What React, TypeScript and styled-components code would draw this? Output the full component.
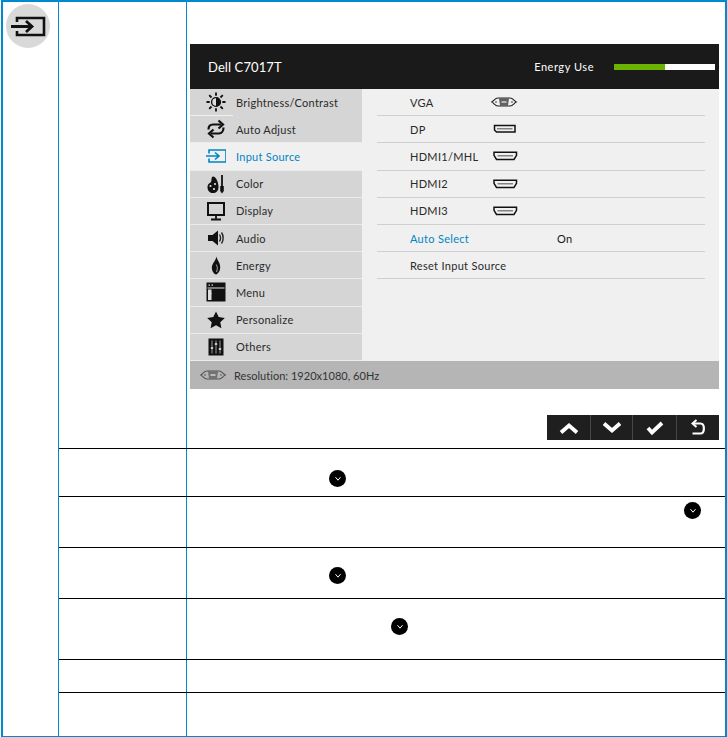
import React from "react";
import styled, { createGlobalStyle } from "styled-components";

const Global = createGlobalStyle`
  html, body { margin: 0; padding: 0; background: #fff; }
  body { font-family: "Lato", "Liberation Sans", sans-serif; }
`;

const Page = styled.div`
  padding-left: 1px;
  width: 726px;
  height: 737px;
`;
const Frame = styled.div`
  box-sizing: border-box;
  width: 726px;
  height: 737px;
  border: 2px solid #0089cf;
  border-bottom-width: 1px;
  display: grid;
  grid-template-columns: 56px 1fr;
`;
const IconColumn = styled.div`
  border-right: 1px solid #0089cf;
  padding: 2px 0 0 3px;
`;
const IconDisc = styled.div`
  width: 44px;
  height: 44px;
  border-radius: 50%;
  background: #d9d9d9;
`;
const Rows = styled.div`
  display: flex;
  flex-direction: column;
`;
const Row = styled.div<{ $h: number; $first?: boolean }>`
  box-sizing: border-box;
  height: ${(p) => p.$h}px;
  display: grid;
  grid-template-columns: 128px 1fr;
  border-top: ${(p) => (p.$first ? "none" : "1px solid #000")};
`;
const LabelCell = styled.div`
  border-right: 1px solid #0089cf;
`;
const BodyCell = styled.div`
  min-width: 0;
`;
const MainCell = styled.div`
  padding: 42px 0 0 3px;
`;
const Menu = styled.div`
  width: 529px;
  height: 345px;
  display: grid;
  grid-template-rows: 45px 272px 28px;
`;
const MenuHeader = styled.div`
  background: #1a1a1a;
  color: #fff;
  display: flex;
  align-items: center;
  justify-content: space-between;
  padding: 0 4px 0 18px;
`;
const Title = styled.span`
  font-size: 13px;
  letter-spacing: 0.1px;
`;
const EnergyGroup = styled.div`
  display: flex;
  align-items: center;
  gap: 20px;
`;
const EnergyLabel = styled.span`
  font-size: 11px;
  letter-spacing: 0.55px;
`;
const EnergyBar = styled.div`
  width: 101px;
  height: 6px;
  background: #fff;
`;
const EnergyFill = styled.div`
  height: 100%;
  width: 51px;
  background: #6cb200;
`;
const MenuBody = styled.div`
  display: grid;
  grid-template-columns: 172px 1fr;
  background: #f0f0f0;
`;
const Sidebar = styled.div`
  display: grid;
  grid-template-rows: repeat(10, 1fr);
`;
const SideItem = styled.div<{ $active?: boolean; $partial?: boolean }>`
  box-sizing: border-box;
  position: relative;
  display: flex;
  align-items: center;
  gap: 10px;
  padding-left: 16px;
  background: ${(p) => (p.$active ? "#f0f0f0" : "#d5d5d5")};
  color: ${(p) => (p.$active ? "#0085c3" : "#2a2a2a")};
  border-bottom: 1px solid ${(p) => (p.$partial ? "#d5d5d5" : "#ececec")};
  font-size: 11px;
  letter-spacing: 0.26px;
  ${(p) =>
    p.$partial &&
    `&::after {
      content: "";
      position: absolute;
      left: 0;
      bottom: -1px;
      width: 43px;
      height: 1px;
      background: #f0f0f0;
    }`}
`;
const Options = styled.div`
  display: grid;
  grid-template-rows: repeat(10, 1fr);
  padding: 0 14px 0 15px;
`;
const Option = styled.div<{ $active?: boolean }>`
  box-sizing: border-box;
  display: grid;
  grid-template-columns: 115px 66px 1fr;
  align-items: center;
  padding-left: 33px;
  border-bottom: 1px solid #cfcfcf;
  color: ${(p) => (p.$active ? "#0085c3" : "#2a2a2a")};
  font-size: 11px;
  letter-spacing: 0.3px;
`;
const OptionIcon = styled.span`
  display: flex;
  align-items: center;
  grid-column: 2;
  margin-left: -34px;
`;
const OptionValue = styled.span`
  grid-column: 2;
  margin-left: 32px;
  color: #1a1a1a;
`;
const MenuFooter = styled.div`
  background: #b5b5b5;
  color: #333;
  display: flex;
  align-items: center;
  gap: 6px;
  padding-left: 10px;
  font-size: 11px;
  letter-spacing: 0.03px;
`;
const Controls = styled.div`
  margin: 26px 0 0 357px;
  width: 172px;
  height: 25px;
  display: grid;
  grid-template-columns: 43px 42px 44px 43px;
  background: #1f1f1f;
`;
const ControlButton = styled.div`
  display: flex;
  align-items: center;
  justify-content: center;
  & + & {
    border-left: 1px solid #484848;
  }
`;
const Badge = styled.div<{ $x: number; $y: number }>`
  width: 17px;
  height: 17px;
  margin: ${(p) => `${p.$y}px 0 0 ${p.$x}px`};
  border-radius: 50%;
  background: #000;
  display: flex;
  align-items: center;
  justify-content: center;
`;

const Svg = ({ w = 20, h = 20, children }: { w?: number; h?: number; children: React.ReactNode }) => (
  <svg width={w} height={h} viewBox={`0 0 ${w} ${h}`} style={{ flex: "none", display: "block" }}>
    {children}
  </svg>
);

const Sun = () => (
  <Svg>
    <circle cx="10" cy="10" r="4.4" fill="#ddd" stroke="#111" strokeWidth="1.4" />
    <path d="M10 5.600a4.400 4.400 0 0 1 0 8.800z" fill="#111" />
    <path d="M10 .5v3.200M10 16.300v3.200M.5 10h3.200M16.300 10h3.200M3.200 3.200l2.300 2.300M14.500 14.500l2.300 2.300M3.200 16.800l2.300-2.300M14.500 5.500l2.300-2.300" stroke="#111" strokeWidth="1.800" />
  </Svg>
);
const Cycle = () => (
  <Svg>
    <path d="M2.500 10.500C2.500 7 4.500 5.500 7 5.500h8" fill="none" stroke="#111" strokeWidth="2.200" />
    <path d="M12.500 1.500l4.500 4-4.500 4" fill="none" stroke="#111" strokeWidth="2.200" />
    <path d="M17.500 8.500c0 3.500-2 6-4.500 6H5" fill="none" stroke="#111" strokeWidth="2.200" />
    <path d="M7.500 10.500l-4.500 4 4.500 4" fill="none" stroke="#111" strokeWidth="2.200" />
  </Svg>
);
const InputIcon = ({ color, large }: { color: string; large?: boolean }) =>
  large ? (
    <Svg w={44} h={44}>
      <path d="M11 18v-4h27v17H11v-4" fill="none" stroke={color} strokeWidth="2.600" />
      <path d="M5 22.500h21M20 17l6 5.500-6 5.500" fill="none" stroke={color} strokeWidth="2.800" />
    </Svg>
  ) : (
    <Svg w={20} h={20}>
      <path d="M3 7.500V4h17V16H3v-3.500" fill="none" stroke={color} strokeWidth="1.600" />
      <path d="M-4 10h17M9 6.500l4 3.500-4 3.500" fill="none" stroke={color} strokeWidth="1.600" />
    </Svg>
  );
const Palette = () => (
  <Svg>
    <path d="M7 2.500c3 0 5.500 5.500 5.500 10.500 0 4-2.500 6-5.500 6s-5.500-2-5.500-6c0-3 2.500-4 3.500-5 .8-1 0-5.500 2-5.500z" fill="#111" />
    <circle cx="4.500" cy="12" r="1.100" fill="#ddd" />
    <circle cx="9" cy="10" r="1.100" fill="#ddd" />
    <circle cx="8" cy="15" r="1.100" fill="#ddd" />
    <path d="M16 1v12" stroke="#111" strokeWidth="1.800" />
    <path d="M14.200 12h3.600v5l-1.800 2.500-1.800-2.500z" fill="#111" />
  </Svg>
);
const Monitor = () => (
  <Svg>
    <rect x="2" y="2" width="16" height="12" fill="none" stroke="#111" strokeWidth="2" />
    <path d="M10 14v4M5 18.500h10" stroke="#111" strokeWidth="1.800" />
  </Svg>
);
const Speaker = () => (
  <Svg>
    <path d="M2 7h4.500L12 2.500v15L6.500 13H2z" fill="#111" />
    <path d="M13.500 6.500c1.200 2 1.200 5 0 7M15.500 4.500c2.200 3 2.200 8 0 11" fill="none" stroke="#222" strokeWidth="1.400" />
  </Svg>
);
const Flame = () => (
  <Svg>
    <path d="M10.500 1.500c.5 3.500 3.700 6 3.700 10.500 0 4-2 6.800-4.200 7.500-2.400-.7-4.200-3.500-4.200-6.800 0-4 3.900-6.700 4.700-11.200z" fill="#111" />
    <path d="M10.300 9.500c1.200 2.500 1.500 4.500.2 7.500" fill="none" stroke="#aaa" strokeWidth="1" />
  </Svg>
);
const WindowIcon = () => (
  <Svg>
    <rect x=".5" y=".5" width="19" height="19" fill="#111" />
    <rect x="1.500" y="5.500" width="17" height="1" fill="#ddd" />
    <rect x="2.500" y="2.500" width="1.500" height="1.200" fill="#ddd" />
    <rect x="5.500" y="2.500" width="1.500" height="1.200" fill="#ddd" />
    <rect x="2" y="7.500" width="3.500" height="10.500" fill="#ddd" />
    <rect x="5.500" y="11" width="0.500" height="1" fill="#ddd" />
  </Svg>
);
const Star = () => (
  <Svg>
    <path d="M10 1.500l2.700 5.600 6.100.8-4.500 4.300 1.100 6.100L10 15.300l-5.400 3 1.100-6.100L1.200 7.900l6.100-.8z" fill="#111" />
  </Svg>
);
const Sliders = () => (
  <Svg>
    <rect x="2.500" y="1.500" width="15" height="17" fill="#111" />
    <path d="M6 3.500v13M10 3.500v13M14 3.500v13" stroke="#bbb" strokeWidth=".8" />
    <path d="M4.800 11h2.400M8.800 7h2.400M12.800 12h2.400" stroke="#eee" strokeWidth="1.300" />
  </Svg>
);
const Vga = ({ color = "#222" }: { color?: string }) => (
  <Svg w={28} h={10}>
    <path d="M.8 5C3 4 4 1 7 1h12c3 0 4 3 6.200 4C23 6 22 9 19 9H7C4 9 3 6 .8 5z" fill="none" stroke={color} strokeWidth="1.100" />
    <path d="M8 1.500h10l-1 7H9z" fill={color} opacity=".7" />
    <path d="M10.500 5h5" stroke="#eee" strokeWidth="1.200" />
    <circle cx="5" cy="5" r=".8" fill={color} />
    <circle cx="21" cy="5" r=".8" fill={color} />
  </Svg>
);
const Dp = () => (
  <Svg w={28} h={10}>
    <path d="M3.500 1.500h20.500v6.500H5.500l-2-2z" fill="none" stroke="#111" strokeWidth="1.500" />
    <path d="M6 4.800h15.500" stroke="#666" strokeWidth="1.200" />
  </Svg>
);
const Hdmi = () => (
  <Svg w={28} h={10}>
    <path d="M3 1.300h22.500v3l-2.500 4.200H5.500L3 4.300z" fill="none" stroke="#111" strokeWidth="1.500" />
    <path d="M6.500 4.800h15.500" stroke="#666" strokeWidth="1.200" />
  </Svg>
);
const Up = () => (
  <Svg w={20} h={14}>
    <path d="M2 11.500l8-7 8 7" fill="none" stroke="#fff" strokeWidth="3.800" />
  </Svg>
);
const Down = () => (
  <Svg w={20} h={14}>
    <path d="M2 2.500l8 7 8-7" fill="none" stroke="#fff" strokeWidth="3.800" />
  </Svg>
);
const Check = () => (
  <Svg w={20} h={14}>
    <path d="M3 7l4 4.500L17 2" fill="none" stroke="#fff" strokeWidth="3.800" />
  </Svg>
);
const Back = () => (
  <Svg w={16} h={17}>
    <path d="M6.500 1L2.500 4.500 6.500 8" fill="none" stroke="#fff" strokeWidth="2" />
    <path d="M3 4.500h7.500c4.500 0 4.500 10 0 10H2.500" fill="none" stroke="#fff" strokeWidth="2.200" />
  </Svg>
);
const MiniChevron = () => (
  <Svg w={8} h={6}>
    <path d="M1.500 1.200l2.500 3 2.500-3" fill="none" stroke="#fff" strokeWidth="1" />
  </Svg>
);

const sideItems: { label: string; icon: React.ReactNode; active?: boolean; partial?: boolean }[] = [
  { label: "Brightness/Contrast", icon: <Sun />, partial: true },
  { label: "Auto Adjust", icon: <Cycle /> },
  { label: "Input Source", icon: <InputIcon color="#0085c3" />, active: true },
  { label: "Color", icon: <Palette /> },
  { label: "Display", icon: <Monitor /> },
  { label: "Audio", icon: <Speaker /> },
  { label: "Energy", icon: <Flame /> },
  { label: "Menu", icon: <WindowIcon /> },
  { label: "Personalize", icon: <Star /> },
  { label: "Others", icon: <Sliders /> },
];

const lowerRows = [
  { h: 48, x: 142, y: 21 },
  { h: 51, x: 497, y: 5 },
  { h: 51, x: 142, y: 19 },
  { h: 61, x: 204, y: 19 },
  { h: 33 },
  { h: 44 },
];

export default function App() {
  return (
    <Page>
      <Global />
      <Frame>
        <IconColumn>
          <IconDisc>
            <InputIcon color="#111" large />
          </IconDisc>
        </IconColumn>
        <Rows>
          <Row $h={446} $first>
            <LabelCell />
            <MainCell>
              <Menu>
                <MenuHeader>
                  <Title>Dell C7017T</Title>
                  <EnergyGroup>
                    <EnergyLabel>Energy Use</EnergyLabel>
                    <EnergyBar>
                      <EnergyFill />
                    </EnergyBar>
                  </EnergyGroup>
                </MenuHeader>
                <MenuBody>
                  <Sidebar>
                    {sideItems.map((item) => (
                      <SideItem key={item.label} $active={item.active} $partial={item.partial}>
                        {item.icon}
                        {item.label}
                      </SideItem>
                    ))}
                  </Sidebar>
                  <Options>
                    <Option>
                      VGA
                      <OptionIcon>
                        <Vga />
                      </OptionIcon>
                    </Option>
                    <Option>
                      DP
                      <OptionIcon>
                        <Dp />
                      </OptionIcon>
                    </Option>
                    <Option>
                      HDMI1/MHL
                      <OptionIcon>
                        <Hdmi />
                      </OptionIcon>
                    </Option>
                    <Option>
                      HDMI2
                      <OptionIcon>
                        <Hdmi />
                      </OptionIcon>
                    </Option>
                    <Option>
                      HDMI3
                      <OptionIcon>
                        <Hdmi />
                      </OptionIcon>
                    </Option>
                    <Option $active>
                      Auto Select
                      <OptionValue>On</OptionValue>
                    </Option>
                    <Option>Reset Input Source</Option>
                  </Options>
                </MenuBody>
                <MenuFooter>
                  <Vga color="#555" />
                  Resolution: 1920x1080, 60Hz
                </MenuFooter>
              </Menu>
              <Controls>
                <ControlButton>
                  <Up />
                </ControlButton>
                <ControlButton>
                  <Down />
                </ControlButton>
                <ControlButton>
                  <Check />
                </ControlButton>
                <ControlButton>
                  <Back />
                </ControlButton>
              </Controls>
            </MainCell>
          </Row>
          {lowerRows.map((r, i) => (
            <Row key={i} $h={r.h}>
              <LabelCell />
              <BodyCell>
                {r.x !== undefined && r.y !== undefined && (
                  <Badge $x={r.x} $y={r.y}>
                    <MiniChevron />
                  </Badge>
                )}
              </BodyCell>
            </Row>
          ))}
        </Rows>
      </Frame>
    </Page>
  );
}
